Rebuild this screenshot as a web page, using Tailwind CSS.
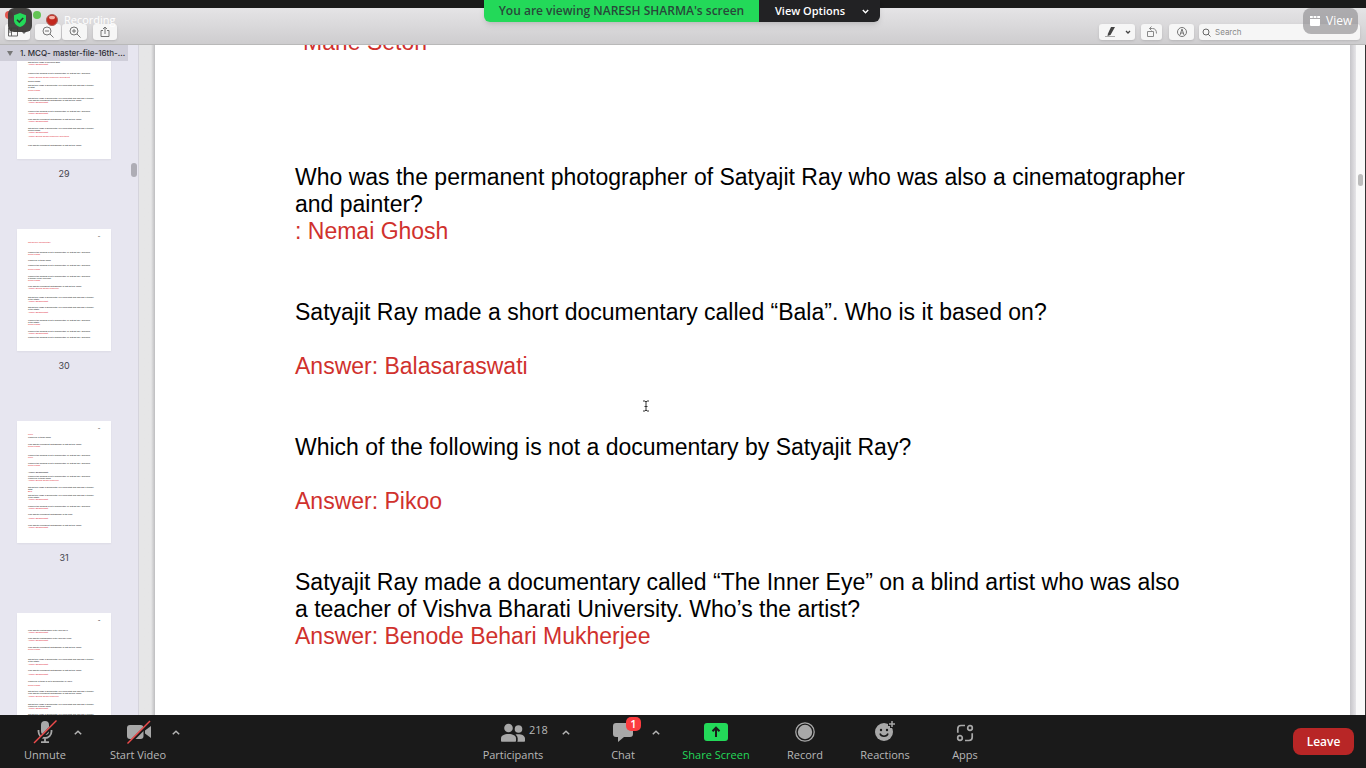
<!DOCTYPE html>
<html lang="en">
<head>
<meta charset="utf-8">
<title>Zoom Meeting</title>
<script src="https://cdn.jsdelivr.net/npm/@tailwindcss/browser@4"></script>
</head>
<body>
<div class="relative flex h-screen flex-col overflow-hidden bg-[#1a1a1a] font-['Open_Sans',sans-serif] text-xs">

  <!-- Shared window toolbar -->
  <header class="mt-2 flex h-[37px] shrink-0 items-end border-b border-[#b9b9b9] bg-linear-to-b from-[#e5e4e6] to-[#cecdcf] pr-1.5 pb-1 pl-[5px]">
    <button aria-label="Sidebar" class="flex h-4 w-[25px] items-center justify-center rounded-[3px] bg-[#f6f6f6] shadow-sm">
      <svg width="20" height="10" viewBox="0 0 20 10" fill="none" stroke="#666"><path d="M.5 1h9v8h-9zM3.500 1v8M1 3h2M1 5h2"/><path d="M14 4l2 2 2-2" stroke-width="1.300"/></svg>
    </button>
    <button aria-label="Zoom out" class="ml-[5px] flex h-4 w-[26px] items-center justify-center rounded-[3px] bg-[#f6f6f6] shadow-sm">
      <svg width="12" height="12" viewBox="0 0 12 12" fill="none" stroke="#777"><circle cx="5" cy="5" r="4"/><path d="M8 8l3.500 3.500M3 5h4"/></svg>
    </button>
    <button aria-label="Zoom in" class="ml-px flex h-4 w-[25px] items-center justify-center rounded-[3px] bg-[#f6f6f6] shadow-sm">
      <svg width="12" height="12" viewBox="0 0 12 12" fill="none" stroke="#777"><circle cx="5" cy="5" r="4"/><path d="M8 8l3.500 3.500M3 5h4M5 3v4"/></svg>
    </button>
    <button aria-label="Share" class="ml-1.5 flex h-4 w-6 items-center justify-center rounded-[3px] bg-[#f6f6f6] shadow-sm">
      <svg width="10" height="12" viewBox="0 0 10 12" fill="none" stroke="#777"><path d="M3 4.500H1v6h8v-6H7M5 8V1M3 3l2-2 2 2"/></svg>
    </button>
    <div class="flex-1"></div>
    <button aria-label="Markup" class="flex h-4 w-9 items-center justify-center rounded-[3px] bg-[#f6f6f6] shadow-sm">
      <svg width="28" height="12" viewBox="0 0 28 12"><path d="M8 1h4l-4.500 8-3 1 .5-2.500z" fill="#444"/><path d="M2 10.500h10" stroke="#aaa"/><path d="M23 5l2 2 2-2" fill="none" stroke="#444" stroke-width="1.300"/></svg>
    </button>
    <button aria-label="Rotate" class="ml-1.5 flex h-4 w-[21px] items-center justify-center rounded-[3px] bg-[#f6f6f6] shadow-sm">
      <svg width="12" height="12" viewBox="0 0 12 12" fill="none" stroke="#888"><path d="M1.500 5.500h6v5h-6zM3.500 2.500h3c2.500 0 4 1.500 4 5M5.500.5l-2 2 2 2"/></svg>
    </button>
    <button aria-label="Annotate" class="ml-[7px] flex h-4 w-[25px] items-center justify-center rounded-[3px] bg-[#f6f6f6] shadow-sm">
      <svg width="12" height="12" viewBox="0 0 12 12" fill="none" stroke="#777"><circle cx="6" cy="6" r="4.500"/><path d="M4 9l2-6 2 6M4.800 7h2.400"/></svg>
    </button>
    <label class="ml-[5px] flex h-4 w-[161px] items-center gap-1 rounded-[3px] bg-[#f6f6f6] pl-[3px] shadow-sm">
      <svg width="9" height="9" viewBox="0 0 9 9" fill="none" stroke="#666"><circle cx="4" cy="4" r="3"/><path d="M6.200 6.200L8.500 8.500"/></svg>
      <input aria-label="Search" placeholder="Search" class="w-24 bg-transparent font-['Inter',sans-serif] text-[8px] leading-3 outline-none placeholder:text-[#8a8a8a]">
    </label>
  </header>

  <main class="flex min-h-0 flex-1 bg-[#e4e4e4]">
    <!-- Page thumbnails -->
    <aside class="flex w-[139px] shrink-0 flex-col border-r border-[#d5d4dc] bg-[#e7e6f0]">
      <div class="mr-[10px] flex h-4 shrink-0 items-center gap-[7px] bg-[#cfced9] pl-[7px] font-['Inter',sans-serif] text-[8px] font-medium text-[#2c2c33]">
        <svg class="shrink-0" width="6" height="5" viewBox="0 0 6 5"><path d="M0 0h6L3 5z" fill="#777"/></svg>
        <span class="whitespace-nowrap">1. MCQ- master-file-16th-...</span>
      </div>
      <div class="relative flex min-h-0 flex-1 flex-col overflow-hidden">
        <div id="thumbs" class="-mt-6 flex flex-col gap-[70px] pl-[17px]"></div>
        <div class="absolute top-[102px] right-px h-3.5 w-1.5 rounded-full bg-[#aeadb5]"></div>
      </div>
    </aside>
    <div class="w-4 shrink-0 bg-linear-to-r from-[#e6e6e7] from-75% to-[#bdbdbf]"></div>

    <!-- Document page -->
    <article class="min-w-0 flex-1 overflow-hidden bg-white pr-[156px] pl-[140px] font-['Liberation_Sans',sans-serif] text-[23px] leading-[27px] text-black">
      <p class="-mt-4 pl-2 text-[#d0312d]">Marie Seton</p>
      <p class="mt-[108px]">Who was the permanent photographer of Satyajit Ray who was also a cinematographer and painter?</p>
      <p class="text-[#d0312d]">: Nemai Ghosh</p>
      <p class="mt-[54px]">Satyajit Ray made a short documentary called “Bala”. Who is it based on?</p>
      <p class="mt-[27px] text-[#d0312d]">Answer: Balasaraswati</p>
      <p class="mt-[54px]">Which of the following is not a documentary by Satyajit Ray?</p>
      <p class="mt-[27px] text-[#d0312d]">Answer: Pikoo</p>
      <p class="mt-[54px]">Satyajit Ray made a documentary called “The Inner Eye” on a blind artist who was also a teacher of Vishva Bharati University. Who’s the artist?</p>
      <p class="text-[#d0312d]">Answer: Benode Behari Mukherjee</p>
    </article>
    <div class="w-1.5 shrink-0 bg-linear-to-r from-[#c6c5c9] to-[#e6e5e8]"></div>
    <div class="w-[9px] shrink-0 bg-[#f9f9f9] pt-[129px]"><div class="ml-0.5 h-3 w-[5px] rounded-full bg-[#bcbcbc]"></div></div>
    <div class="w-px shrink-0 bg-[#333]"></div>
  </main>

  <!-- Meeting controls -->
  <footer class="flex h-[53px] shrink-0 items-stretch bg-[#1a1a1a] pr-3 pl-[22px] text-[11px] text-[#b8b8b8]">
    <button class="flex w-[46px] flex-col items-center pt-1">
      <svg width="24" height="26" viewBox="0 0 24 26"><rect x="8" y="2" width="8" height="14" rx="4" fill="#a8a8a8"/><path d="M5.500 11v1.500a6.500 6.500 0 0 0 13 0V11M12 19v4M8 23.200h8" fill="none" stroke="#a8a8a8" stroke-width="1.800"/><path d="M2 24.500L24 2" stroke="#1a1a1a" stroke-width="3"/><path d="M1 24L23.500 1.500" stroke="#ee4b4b" stroke-width="1.500"/></svg>
      <span class="leading-5 whitespace-nowrap">Unmute</span>
    </button>
    <button aria-label="Audio options" class="flex w-5 justify-center pt-[15px]"><svg width="8" height="5" viewBox="0 0 8 5" fill="none" stroke="#b4b4b4" stroke-width="1.500"><path d="M.8 4.300L4 1.200l3.200 3.100"/></svg></button>
    <button class="ml-[18px] flex w-16 flex-col items-center pt-1">
      <svg width="26" height="26" viewBox="0 0 26 26"><rect x="2" y="6" width="16.500" height="14" rx="3" fill="#a8a8a8"/><path d="M20 11.500L26 7v12l-6-4.500z" fill="#a8a8a8"/><path d="M3.500 25L26 2.500" stroke="#1a1a1a" stroke-width="3"/><path d="M2.500 24.500L25 2" stroke="#ee4b4b" stroke-width="1.500"/></svg>
      <span class="leading-5 whitespace-nowrap">Start Video</span>
    </button>
    <button aria-label="Video options" class="flex w-3 justify-center pt-[15px]"><svg width="8" height="5" viewBox="0 0 8 5" fill="none" stroke="#b4b4b4" stroke-width="1.500"><path d="M.8 4.300L4 1.200l3.200 3.100"/></svg></button>

    <div class="mx-auto flex pr-3.5">
      <button class="flex w-[74px] flex-col items-center pt-1">
        <span class="relative">
          <svg width="26" height="26" viewBox="0 0 26 26" fill="#a8a8a8"><circle cx="8.500" cy="9" r="4.300"/><path d="M1 22v-2.500C1 16.500 4 15 8.500 15s7.500 1.500 7.500 4.500V22q0 .8-.8.800H1.800Q1 22.800 1 22z"/><circle cx="18.500" cy="10" r="3.800"/><path d="M15.500 15.500c4-1 9.500 0 9.500 4V22q0 .8-.8.800h-7q.5-.4.5-1.500v-2q0-2.300-2.200-3.800z"/></svg>
          <span class="absolute top-px left-full ml-[3px] leading-5">218</span>
        </span>
        <span class="leading-5">Participants</span>
      </button>
      <button aria-label="Participant options" class="flex w-8 justify-center pt-[15px]"><svg width="8" height="5" viewBox="0 0 8 5" fill="none" stroke="#b4b4b4" stroke-width="1.500"><path d="M.8 4.300L4 1.200l3.200 3.100"/></svg></button>
      <button class="ml-[18px] flex w-[46px] flex-col items-center pt-1">
        <span class="relative">
          <svg width="22" height="26" viewBox="0 0 22 26"><path d="M4 4h14q3 0 3 3v8q0 3-3 3h-6l-6 5v-5H4q-3 0-3-3V7q0-3 3-3z" fill="#a8a8a8"/></svg>
          <span class="absolute -top-0.5 left-3.5 flex h-3.5 w-[15px] items-center justify-center rounded-[5px] bg-[#fb3c3f] font-semibold text-white">1</span>
        </span>
        <span class="leading-5">Chat</span>
      </button>
      <button aria-label="Chat options" class="flex w-5 justify-center pt-[15px]"><svg width="8" height="5" viewBox="0 0 8 5" fill="none" stroke="#b4b4b4" stroke-width="1.500"><path d="M.8 4.300L4 1.200l3.200 3.100"/></svg></button>
      <button class="ml-2.5 flex w-20 flex-col items-center pt-1 text-[#23d959]">
        <svg width="24" height="26" viewBox="0 0 24 26"><rect y="4" width="24" height="18" rx="3" fill="#23d959"/><path d="M12 18V9M8.500 12.200L12 8.700l3.500 3.500" fill="none" stroke="#1a1a1a" stroke-width="2"/></svg>
        <span class="leading-5 whitespace-nowrap">Share Screen</span>
      </button>
      <button class="ml-6 flex w-[50px] flex-col items-center pt-1">
        <svg width="22" height="26" viewBox="0 0 22 26"><circle cx="11" cy="13" r="9.200" fill="none" stroke="#a8a8a8" stroke-width="1.300"/><circle cx="11" cy="13" r="7.200" fill="#a8a8a8"/></svg>
        <span class="leading-5">Record</span>
      </button>
      <button class="ml-[25px] flex w-[60px] flex-col items-center pt-1">
        <svg width="22" height="26" viewBox="0 0 22 26"><circle cx="10" cy="13" r="9" fill="#a8a8a8"/><circle cx="7" cy="11" r="1.200" fill="#1a1a1a"/><circle cx="13" cy="11" r="1.200" fill="#1a1a1a"/><path d="M6 14.500c1 3.500 7 3.500 8 0" fill="none" stroke="#1a1a1a" stroke-width="1.500"/><path d="M18 1v8M14 5h8" stroke="#1a1a1a" stroke-width="4"/><path d="M18 2v6M15 5h6" stroke="#a8a8a8" stroke-width="1.500"/></svg>
        <span class="leading-5">Reactions</span>
      </button>
      <button class="ml-[30px] flex w-10 flex-col items-center pt-1">
        <svg width="18" height="26" viewBox="0 0 18 26" fill="none" stroke="#a8a8a8" stroke-width="1.700"><circle cx="14" cy="9" r="2.300"/><circle cx="4" cy="19" r="2.300"/><path d="M9 6.500H5Q1.800 6.500 1.800 9.700v4M9 21.500h4q3.200 0 3.200-3.200v-4"/></svg>
        <span class="leading-5">Apps</span>
      </button>
    </div>
    <button class="h-[27px] w-[61px] self-center rounded-lg bg-[#b82626] text-xs font-semibold text-white">Leave</button>
  </footer>

  <!-- Overlays on top of the shared screen -->
  <div class="absolute top-[11px] left-[5px] size-2 rounded-full bg-[#e2564e]"></div>
  <div class="absolute top-[11px] left-[33px] size-2 rounded-full bg-[#63c454]"></div>
  <button aria-label="Meeting information" class="absolute top-2 left-2 flex size-6 items-center justify-center rounded-md bg-[#3b3a38]/95">
    <svg width="14" height="16" viewBox="0 0 14 16"><path d="M7 1l6 2.200v5c0 3.300-2.600 5.600-6 6.800-3.400-1.200-6-3.500-6-6.800v-5z" fill="#23d959"/><path d="M4 7.700l2.300 2.300L10.200 6" fill="none" stroke="#2c3a30" stroke-width="1.600"/></svg>
  </button>
  <div class="absolute top-2.5 left-[46px] flex items-center gap-1.5 text-white">
    <svg width="12" height="20" viewBox="0 0 12 20"><circle cx="6" cy="10" r="5.500" fill="#c3281f" stroke="#a9635c"/><ellipse cx="6" cy="7.500" rx="3" ry="1.800" fill="#f3b3a8"/></svg>
    <span class="text-[11px] leading-5">Recording</span>
  </div>
  <div class="absolute top-0 left-[484px] flex h-[22px] overflow-hidden rounded-b-md font-semibold shadow-md">
    <div class="flex w-[275px] items-center justify-center bg-[#23d959] whitespace-nowrap text-[#28493a]">You are viewing NARESH SHARMA's screen</div>
    <button class="flex w-[121px] items-center bg-[#222224] pl-4 text-[11px] text-white"><span class="w-[87px] text-left whitespace-nowrap">View Options</span><svg width="7" height="5" viewBox="0 0 7 5" fill="none" stroke="#fff" stroke-width="1.400"><path d="M.8 1l2.700 2.700L6.200 1"/></svg></button>
  </div>
  <button class="absolute top-2 right-2 flex h-[26px] w-[55px] items-center gap-1.5 rounded-lg bg-[#8f8e90]/65 pl-[7px] text-white">
    <svg width="10" height="10" viewBox="0 0 10 10" fill="#fff"><path d="M0 0h2.800v2H0zM3.600 0h2.800v2H3.600zM7.200 0H10v2H7.200zM0 3h10v6q0 1-1 1H1Q0 10 0 9z"/></svg>
    <span>View</span>
  </button>
  <svg class="absolute top-[400px] left-[642px]" width="8" height="12" viewBox="0 0 8 12" fill="none" stroke="#333"><path d="M1 1h2l1 1 1-1h2M4 2v8M1 11h2l1-1 1 1h2M2.500 6.500h3"/></svg>
</div>

<script>
  // Each row: [distance from page top, colour (k = black, r = red), text]
  const Q1 = "Satyajit Ray made a documentary on a blind artist who was also a teacher", Q2 = "Who was the permanent photographer of Satyajit Ray films?";
  const Q3 = "Which of the following is not a documentary by Satyajit Ray, and who?";
  const S = "of the artist?", L = "Which one of these films?", A = "Nemai Ghosh", B = "Answer: Balasaraswati";
  const pages = [
    [29, [[25,"k","Satyajit Ray made a film called Bala"],[27,"r",B],[36,"k",Q3],[40,"r","Answer: Benode Behari Mukherjee and Satyajit"],[44,"k",A],[48,"k",Q1],[50,"k","of artist"],[53,"r",A],[61,"k",Q1],[63,"k",Q2],[65,"r",B],[74,"k",Q3],[76,"r",B],[82,"k",Q2],[84,"r",B],[91,"k",Q1],[93,"k",A],[95,"r",B],[99,"r","Answer: Benode Behari Mukherjee and others"],[108,"k",Q2]]],
    [30, [[13,"r","Satyajit Ray documentary"],[23,"k",Q3],[25,"r",A],[31,"k",L],[36,"k",Q3],[40,"r",A],[47,"k",Q3],[49,"k","a teacher of the University"],[51,"r",A],[57,"k",Q2],[59,"r","Answer: Benode Behari Mukherjee"],[68,"k",Q1],[70,"k",S],[72,"r",B],[78,"k",Q1],[80,"k",S],[83,"r",B],[91,"k",Q3],[93,"k",S],[95,"r",A],[102,"k",Q3],[104,"r",B],[108,"k",Q3]]],
    [31, [[13,"r","Pikoo"],[16,"k",L],[23,"k",Q2],[25,"r",A],[34,"k",Q3],[36,"r","Pikoo"],[42,"k",Q3],[44,"r",A],[51,"k",B],[55,"k",Q3],[57,"k",L],[59,"r","Answer: Benode Behari Mukherjee"],[66,"k",Q1],[68,"k","artist"],[70,"r","Bala"],[74,"k",Q1],[76,"k",S],[78,"r",B],[85,"k",Q3],[87,"r",B],[93,"k","Who was the permanent photographer of the film?"],[97,"r",B],[104,"k",Q2],[106,"r",B]]],
    [32, [[17,"k","Who was the photographer of the Inner Eye?"],[19,"r",B],[25,"k","Who was the photographer of the Inner Eye film?"],[27,"r",B],[34,"k",Q2],[36,"r",A],[46,"k",Q1],[48,"k",S],[51,"r",B],[57,"k",Q2],[61,"r",B],[68,"k","Which one of these is not a documentary by Ray?"],[72,"r",A],[78,"k",Q1],[80,"k",Q2],[83,"r","Answer: Benode Behari Mukherjee"],[91,"k",Q1],[93,"k",L],[95,"r",B],[101,"k",Q1]]]
  ];
  document.getElementById("thumbs").innerHTML = pages.map(([num, rows]) => {
    let end = 8;
    const lines = rows.map(([y, c, t]) => {
      const gap = y - 1 - end; end = y + 1;
      return `<p class="${c === "r" ? "text-[#e0182d]" : "text-black"}" style="margin-top:${gap}px">${t}</p>`;
    }).join("");
    return `<figure class="relative h-[122px] w-[94px] bg-white pt-[6px] pl-[11px] font-['Liberation_Sans',sans-serif] text-[2px] leading-[2px] whitespace-nowrap shadow-xs"><p class="pl-[70px]">${num}</p>${lines}<figcaption class="absolute inset-x-0 top-full pt-[7px] text-center font-['Inter',sans-serif] text-[9px] leading-4 text-[#44444c]">${num}</figcaption></figure>`;
  }).join("");
</script>
</body>
</html>
